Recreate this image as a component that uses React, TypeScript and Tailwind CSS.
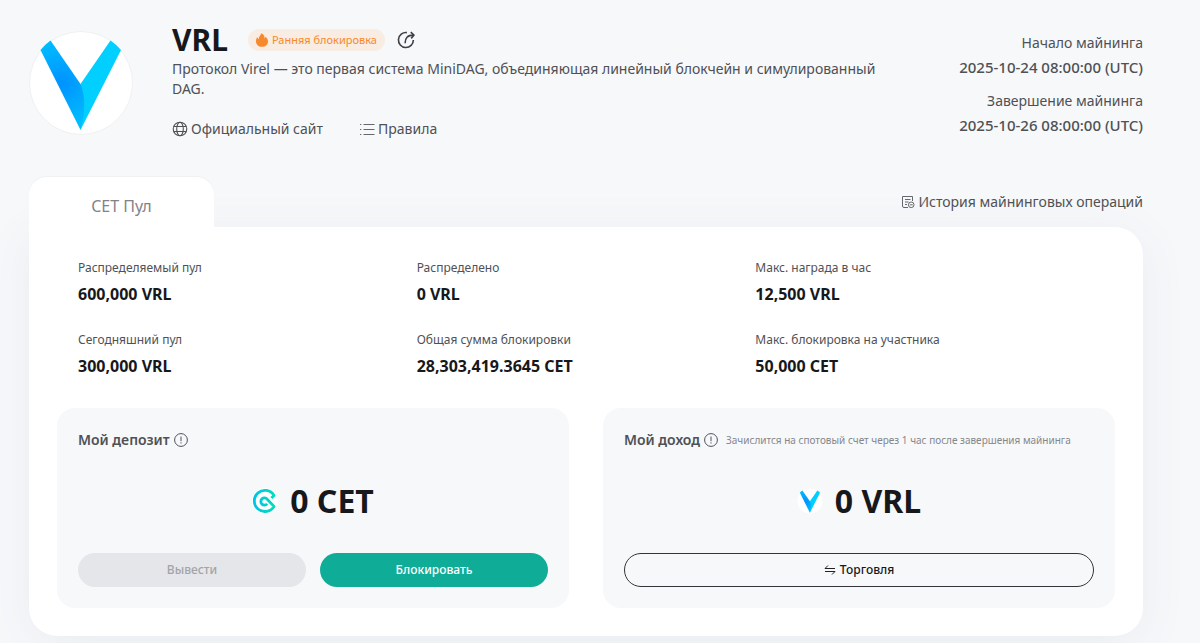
import type { ReactNode } from "react";
import { clsx } from "clsx";

interface Stat {
  label: string;
  value: string;
}

const stats: Stat[] = [
  { label: "Распределяемый пул", value: "600,000 VRL" },
  { label: "Распределено", value: "0 VRL" },
  { label: "Макс. награда в час", value: "12,500 VRL" },
  { label: "Сегодняшний пул", value: "300,000 VRL" },
  { label: "Общая сумма блокировки", value: "28,303,419.3645 CET" },
  { label: "Макс. блокировка на участника", value: "50,000 CET" },
];

const schedule: Stat[] = [
  { label: "Начало майнинга", value: "2025-10-24 08:00:00 (UTC)" },
  { label: "Завершение майнинга", value: "2025-10-26 08:00:00 (UTC)" },
];

const VirelLogo = ({ id, className }: { id: string; className?: string }) => (
  <svg viewBox="0 0 104 104" className={className} aria-hidden="true">
    <defs>
      <radialGradient id={id} cx="33" cy="52" r="46" gradientUnits="userSpaceOnUse">
        <stop offset="0" stopColor="#0092ff" />
        <stop offset="1" stopColor="#00c0ff" />
      </radialGradient>
    </defs>
    <circle cx="52" cy="52" r="51.5" fill="#fff" stroke="#eff0f2" />
    <path d="M81.500 9.500A52 52 0 0 1 92 19L51.500 99 46 68 51.500 53Z" fill="#00cfff" />
    <path d="M21.500 9.500A52 52 0 0 0 11.500 19L51.500 99C56 82 57 67 51.500 53Z" fill={`url(#${id})`} />
  </svg>
);

const CetLogo = () => (
  <svg viewBox="0 0 26 26" className="size-[26px]" fill="none" aria-hidden="true">
    <defs>
      <linearGradient id="cet" x1="1" y1="13" x2="25" y2="13" gradientUnits="userSpaceOnUse">
        <stop stopColor="#00c3e6" />
        <stop offset="1" stopColor="#00e0b4" />
      </linearGradient>
    </defs>
    <circle cx="13" cy="13" r="13" fill="#fff" />
    <path
      d="M19.4 10 22 7.4A10.600 10.600 0 1 0 22 18.400L15.200 11.200A3.600 3.600 0 1 0 15.200 15.800"
      stroke="url(#cet)"
      strokeWidth="2.8"
      strokeLinejoin="round"
    />
  </svg>
);

const FlameIcon = () => (
  <svg viewBox="0 0 14 16" className="h-[14px] w-3" fill="#f7892b" aria-hidden="true">
    <path d="M6.6 0C9.5 1.7 10.2 3.9 9.9 6.2c.7-.4 1-1 1.1-1.9C13 5.800 14 7.700 14 9.700 14 13.300 11 16 7 16S0 13.300 0 9.800C0 7.600.6 5.900 1.500 4.600c.2 1.200.8 2 1.700 2.400C3.300 4.200 4.800 2.600 6.600 0Z" />
  </svg>
);

const ShareIcon = () => (
  <svg viewBox="0 0 20 20" className="size-[18px]" fill="none" stroke="#3f4145" strokeWidth="1.8" aria-hidden="true">
    <path d="M11 1.800A8.300 8.300 0 1 0 18.200 10" />
    <path d="M9 13.500C9 8 11.500 4.600 18.500 4.600" />
    <path d="M15.300 1.200 18.800 4.600 15.800 8.200" />
  </svg>
);

const GlobeIcon = () => (
  <svg viewBox="0 0 16 16" className="size-4" fill="none" stroke="#4f5155" strokeWidth="1.1" aria-hidden="true">
    <circle cx="8" cy="8" r="6.800" />
    <ellipse cx="8" cy="8" rx="3.300" ry="6.800" />
    <path d="M1.900 5.500h12.200M1.900 10.500h12.200" />
  </svg>
);

const ListIcon = () => (
  <svg viewBox="0 0 16 16" className="size-4" fill="none" stroke="#66686c" strokeWidth="1.2" aria-hidden="true">
    <path d="M4.500 3.500h11M4.500 8.500h11M4.500 13.500h11" />
    <path d="M1 3.500h1.300M1 8.500h1.300M1 13.500h1.300" />
  </svg>
);

const HistoryIcon = () => (
  <svg viewBox="0 0 14 14" className="size-[14px]" fill="none" stroke="#66686c" aria-hidden="true">
    <path d="M7 12.500H3a1.500 1.500 0 0 1-1.500-1.500V1.500h10V6" />
    <path d="M4 4.500h5.500M4 7h3.500M4 9.500h2" />
    <circle cx="10.200" cy="9.800" r="2.800" />
    <path d="M8.800 9.800h2.900" />
  </svg>
);

const InfoIcon = () => (
  <svg viewBox="0 0 14 14" className="size-[14px]" fill="none" stroke="#4f5155" aria-hidden="true">
    <circle cx="7" cy="7" r="6.400" />
    <path d="M7 3.500v4.700M7 9.300v1.200" />
  </svg>
);

const SwapIcon = () => (
  <svg viewBox="0 0 12 12" className="size-3" fill="none" stroke="#222" aria-hidden="true">
    <path d="M11 4.500H1L4 1.500M1 7.500h10L8 10.500" />
  </svg>
);

const IconLink = ({ icon, children }: { icon: ReactNode; children: ReactNode }) => (
  <a href="#" className="flex items-center gap-[3px] text-sm text-[#4f5155]">
    {icon}
    {children}
  </a>
);

const PanelTitle = ({ children }: { children: ReactNode }) => (
  <h2 className="flex items-center gap-1 text-sm font-semibold whitespace-nowrap text-[#4f5155]">
    {children}
    <InfoIcon />
  </h2>
);

const PillButton = ({ variant, children }: { variant: "disabled" | "primary" | "outline"; children: ReactNode }) => (
  <button
    type="button"
    disabled={variant === "disabled"}
    className={clsx(
      "flex h-[34px] flex-1 items-center justify-center gap-1 rounded-full text-xs font-medium",
      variant === "disabled" && "bg-[#e5e6ea] text-[#a2a4a8]",
      variant === "primary" && "bg-[#0fad98] text-white",
      variant === "outline" && "border border-[#33353a] text-[#17181b]",
    )}
  >
    {children}
  </button>
);

export default function App() {
  return (
    <main className="min-h-screen overflow-hidden bg-[#f7f8fa] pt-[27px] pr-[57px] pb-2 pl-[29px] font-['Noto_Sans',sans-serif]">
      <header className="flex items-start">
        <VirelLogo id="avatar" className="mt-1 size-[104px] shrink-0" />
        <div className="ml-[39px] max-w-[720px] flex-1">
          <div className="flex h-[26px] items-center">
            <h1 className="text-3xl font-bold text-[#17181b]">VRL</h1>
            <span className="ml-5 flex h-[22px] items-center gap-1 rounded-full bg-[#f8ece3] px-2 text-[11px] text-[#f7892b]">
              <FlameIcon />
              Ранняя блокировка
            </span>
            <button type="button" aria-label="Поделиться" className="ml-3">
              <ShareIcon />
            </button>
          </div>
          <p className="mt-[6px] text-sm leading-5 text-[#4f5155]">
            Протокол Virel — это первая система MiniDAG, объединяющая линейный блокчейн и симулированный DAG.
          </p>
          <nav className="mt-5 flex gap-9">
            <IconLink icon={<GlobeIcon />}>Официальный сайт</IconLink>
            <IconLink icon={<ListIcon />}>Правила</IconLink>
          </nav>
        </div>
        <dl className="ml-auto space-y-[10px] pt-1 text-right leading-6 text-[#4f5155]">
          {schedule.map(({ label, value }) => (
            <div key={label}>
              <dt className="text-sm leading-6">{label}</dt>
              <dd className="text-[15px] leading-6 font-medium">{value}</dd>
            </div>
          ))}
        </dl>
      </header>

      <section className="mt-[38px]">
        <div className="flex items-center justify-between">
          <button
            type="button"
            className="relative z-10 h-[50px] w-[185px] rounded-t-[18px] bg-white pt-2 text-base text-[#818388] shadow-[0_-1px_1px_rgba(0,0,0,0.03)]"
          >
            CET Пул
          </button>
          <IconLink icon={<HistoryIcon />}>История майнинговых операций</IconLink>
        </div>

        <div className="rounded-[28px] rounded-tl-none bg-white px-7 pt-[31px] pb-7 shadow-[0_8px_48px_rgba(40,80,120,0.07)]">
          <dl className="grid grid-cols-3 gap-y-6 px-[21px]">
            {stats.map(({ label, value }) => (
              <div key={label}>
                <dt className="text-xs leading-5 text-[#4f5155]">{label}</dt>
                <dd className="mt-1 text-base leading-6 font-bold text-[#17181b]">{value}</dd>
              </div>
            ))}
          </dl>

          <div className="mt-[30px] grid grid-cols-2 gap-[34px]">
            <div className="rounded-[18px] bg-[#f7f8fa] px-[21px] pt-[22px] pb-[21px]">
              <PanelTitle>Мой депозит</PanelTitle>
              <p className="mt-[31px] flex h-10 items-center justify-center gap-3 text-[32px] font-bold text-[#17181b]">
                <CetLogo />0 CET
              </p>
              <div className="mt-8 flex gap-[14px]">
                <PillButton variant="disabled">Вывести</PillButton>
                <PillButton variant="primary">Блокировать</PillButton>
              </div>
            </div>

            <div className="rounded-[18px] bg-[#f7f8fa] px-[21px] pt-[22px] pb-[21px]">
              <div className="flex items-center gap-2">
                <PanelTitle>Мой доход</PanelTitle>
                <span className="text-[10px] leading-4 text-[#85878b]">
                  Зачислится на спотовый счет через 1 час после завершения майнинга
                </span>
              </div>
              <p className="mt-[31px] flex h-10 items-center justify-center gap-3 text-[32px] font-bold text-[#17181b]">
                <VirelLogo id="income" className="size-[26px]" />0 VRL
              </p>
              <div className="mt-8 flex">
                <PillButton variant="outline">
                  <SwapIcon />
                  Торговля
                </PillButton>
              </div>
            </div>
          </div>
        </div>
      </section>
    </main>
  );
}
